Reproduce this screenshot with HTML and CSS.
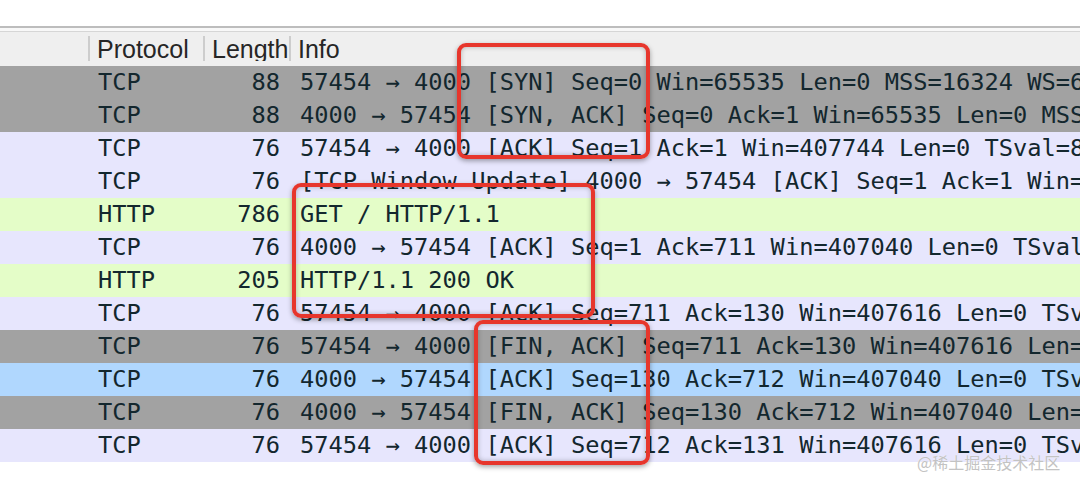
FILE: index.html
```html
<!DOCTYPE html>
<html lang="zh">
<head>
<meta charset="utf-8">
<title>Wireshark</title>
<link rel="stylesheet" href="styles.css">
</head>
<body>
<div class="page">
  <div class="top"></div>
  <div class="table">
    <div class="head">
      <div class="hc hc-blank"></div>
      <div class="hc">Protocol</div>
      <div class="hc">Length</div>
      <div class="hc">Info</div>
    </div>
    <div class="row gray"><span class="c0"></span><span class="proto">TCP</span><span class="len">88</span><span class="info">57454 → 4000 [SYN] Seq=0 Win=65535 Len=0 MSS=16324 WS=64 TSval=812345 TSecr=0</span></div>
    <div class="row gray"><span class="c0"></span><span class="proto">TCP</span><span class="len">88</span><span class="info">4000 → 57454 [SYN, ACK] Seq=0 Ack=1 Win=65535 Len=0 MSS=16324 WS=64</span></div>
    <div class="row lav"><span class="c0"></span><span class="proto">TCP</span><span class="len">76</span><span class="info">57454 → 4000 [ACK] Seq=1 Ack=1 Win=407744 Len=0 TSval=812345 TSecr=0</span></div>
    <div class="row lav"><span class="c0"></span><span class="proto">TCP</span><span class="len">76</span><span class="info">[TCP Window Update] 4000 → 57454 [ACK] Seq=1 Ack=1 Win=407744 Len=0</span></div>
    <div class="row green"><span class="c0"></span><span class="proto">HTTP</span><span class="len">786</span><span class="info">GET / HTTP/1.1 </span></div>
    <div class="row lav"><span class="c0"></span><span class="proto">TCP</span><span class="len">76</span><span class="info">4000 → 57454 [ACK] Seq=1 Ack=711 Win=407040 Len=0 TSval=812345</span></div>
    <div class="row green"><span class="c0"></span><span class="proto">HTTP</span><span class="len">205</span><span class="info">HTTP/1.1 200 OK </span></div>
    <div class="row lav"><span class="c0"></span><span class="proto">TCP</span><span class="len">76</span><span class="info">57454 → 4000 [ACK] Seq=711 Ack=130 Win=407616 Len=0 TSval=812345</span></div>
    <div class="row gray"><span class="c0"></span><span class="proto">TCP</span><span class="len">76</span><span class="info">57454 → 4000 [FIN, ACK] Seq=711 Ack=130 Win=407616 Len=0 TSval=8</span></div>
    <div class="row blue"><span class="c0"></span><span class="proto">TCP</span><span class="len">76</span><span class="info">4000 → 57454 [ACK] Seq=130 Ack=712 Win=407040 Len=0 TSval=812345</span></div>
    <div class="row gray"><span class="c0"></span><span class="proto">TCP</span><span class="len">76</span><span class="info">4000 → 57454 [FIN, ACK] Seq=130 Ack=712 Win=407040 Len=0 TSval=8</span></div>
    <div class="row lav"><span class="c0"></span><span class="proto">TCP</span><span class="len">76</span><span class="info">57454 → 4000 [ACK] Seq=712 Ack=131 Win=407616 Len=0 TSval=812345</span></div>
  </div>
  <div class="mark mark-1"></div>
  <div class="mark mark-2"></div>
  <div class="mark mark-3"></div>
  <div class="watermark">@稀土掘金技术社区</div>
</div>
</body>
</html>
```

FILE: styles.css
```css
html, body {
  margin: 0;
  padding: 0;
  background: #ffffff;
}

.page {
  position: relative;
  width: 1080px;
  height: 487px;
  overflow: hidden;
  background: #ffffff;
}

.top {
  height: 26px;
  background: #ffffff;
}

.table {
  display: flex;
  flex-direction: column;
}

.head {
  display: grid;
  grid-template-columns: 88px 115px 86px 1fr;
  height: 40px;
  box-sizing: border-box;
  border-top: 2px solid #bdbdbd;
  box-shadow: inset 0 3px 0 #f8f8f8, inset 0 4px 0 #d6d6d6;
  background: #efefef;
  font-family: "Liberation Sans", Arial, sans-serif;
  font-size: 25px;
  color: #262626;
}

.hc {
  display: flex;
  align-items: center;
  padding: 2px 0 0 7px;
  overflow: hidden;
  white-space: nowrap;
  border-left: 2px solid #cdcdcd;
  margin: 8px 0 5px;
  line-height: 1;
}

.hc-blank {
  border-left: none;
}

.row {
  display: grid;
  grid-template-columns: 88px 115px 86px 1fr;
  height: 33px;
  align-items: center;
  font-family: "DejaVu Sans Mono", "Liberation Mono", monospace;
  font-size: 23.7px;
  color: #13272e;
  white-space: nowrap;
}

.row span {
  overflow: hidden;
  line-height: 33px;
}

.proto {
  padding-left: 10px;
}

.len {
  text-align: right;
  padding-right: 9px;
}

.info {
  padding-left: 11px;
}

.gray { background: #a2a2a2; }
.lav { background: #e7e6fd; }
.green { background: #e4fdc8; }
.blue { background: #b0d7fe; }

.mark {
  position: absolute;
  box-sizing: border-box;
  border: 4px solid #e7362c;
  border-radius: 9px;
  box-shadow: 0 2px 5px rgba(0, 0, 0, 0.35), inset 0 0 5px rgba(0, 0, 0, 0.25);
}

.mark-1 { left: 457px; top: 43px; width: 193px; height: 116px; }
.mark-2 { left: 292px; top: 183px; width: 303px; height: 135px; }
.mark-3 { left: 474px; top: 320px; width: 176px; height: 145px; }

.watermark {
  position: absolute;
  left: 917px;
  top: 451px;
  font-family: "Noto Sans CJK SC", "Liberation Sans", sans-serif;
  font-size: 16px;
  color: #c3c3c3;
  text-shadow: 0 0 1px #ffffff;
  line-height: 22px;
}
```
